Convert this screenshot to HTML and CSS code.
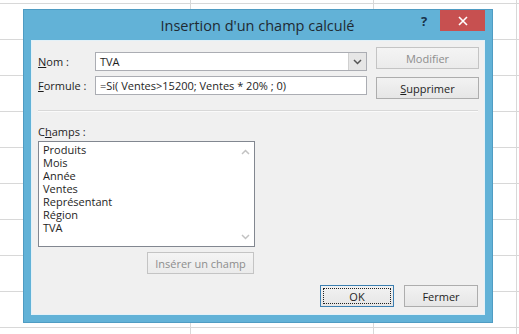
FILE: index.html
```html
<!DOCTYPE html>
<html lang="fr">
<head>
<meta charset="utf-8">
<title>Insertion d'un champ calculé</title>
<link rel="stylesheet" href="styles.css">
</head>
<body>
<div class="dialog">
  <div class="titlebar">
    <div class="title">Insertion d'un champ calculé</div>
    <div class="help">?</div>
    <div class="close">
      <svg width="10" height="10" viewBox="0 0 10 10"><path d="M1 1 L9 9 M9 1 L1 9" stroke="#fff" stroke-width="1.6" fill="none"/></svg>
    </div>
  </div>
  <div class="content">
    <div class="top">
      <div class="fields">
        <div class="row">
          <label class="lbl"><u>N</u>om :</label>
          <div class="combo">
            <span class="val">TVA</span>
            <span class="drop">
              <svg width="9" height="6" viewBox="0 0 9 6"><path d="M1 1 L4.5 4.5 L8 1" stroke="#555" stroke-width="1.5" fill="none"/></svg>
            </span>
          </div>
        </div>
        <div class="row">
          <label class="lbl"><u>F</u>ormule :</label>
          <div class="input"><span class="val">=Si( Ventes&gt;15200; Ventes * 20% ; 0)</span></div>
        </div>
      </div>
      <div class="side">
        <div class="btn disabled">Modifier</div>
        <div class="btn"><u>S</u>upprimer</div>
      </div>
    </div>
    <div class="sep"></div>
    <div class="champs-lbl">C<u>h</u>amps :</div>
    <div class="list">
      <ul class="items">
        <li>Produits</li>
        <li>Mois</li>
        <li>Année</li>
        <li>Ventes</li>
        <li>Représentant</li>
        <li>Région</li>
        <li>TVA</li>
      </ul>
      <div class="scroll">
        <svg width="9" height="6" viewBox="0 0 9 6"><path d="M1 5 L4.5 1.5 L8 5" stroke="#c2c2c2" stroke-width="1.5" fill="none"/></svg>
        <svg width="9" height="6" viewBox="0 0 9 6"><path d="M1 1 L4.5 4.5 L8 1" stroke="#c2c2c2" stroke-width="1.5" fill="none"/></svg>
      </div>
    </div>
    <div class="insert-row">
      <div class="btn disabled insert">Insérer un champ</div>
    </div>
    <div class="footer">
      <div class="btn ok"><span class="focus">OK</span></div>
      <div class="btn fermer">Fermer</div>
    </div>
  </div>
</div>
</body>
</html>
```

FILE: styles.css
```css
* { box-sizing: border-box; }
html, body { margin: 0; padding: 0; }
body {
  width: 519px;
  height: 334px;
  overflow: hidden;
  font-family: "Open Sans", "Noto Sans", sans-serif;
  font-size: 11px;
  color: #1e1e1e;
  background-color: #fff;
  background-image:
    linear-gradient(to right, transparent 190px, #d8d8d8 190px, #d8d8d8 191px, transparent 191px, transparent 373px, #d8d8d8 373px, #d8d8d8 374px, transparent 374px, transparent 516px, #d8d8d8 516px, #d8d8d8 517px, transparent 517px),
    repeating-linear-gradient(to bottom, transparent 0, transparent 3px, #d8d8d8 3px, #d8d8d8 4px, transparent 4px, transparent 36px);
  padding-top: 9px;
  padding-left: 23px;
}
.dialog {
  width: 470px;
  height: 314px;
  background: #62b2d7;
  border: 1px solid #4f9cc3;
  padding: 0 7px 7px 7px;
  display: flex;
  flex-direction: column;
}
.titlebar {
  height: 30px;
  display: flex;
  align-items: flex-start;
}
.title {
  flex: 1;
  text-align: center;
  font-size: 14.5px;
  line-height: 31px;
  color: #1f2a33;
  padding-left: 70px;
}
.help {
  width: 20px;
  font-weight: bold;
  font-size: 13px;
  color: #18334a;
  line-height: 22px;
  text-align: center;
  margin-right: 6px;
}
.close {
  width: 45px;
  height: 21px;
  background: #c75050;
  display: flex;
  align-items: center;
  justify-content: center;
}
.content {
  flex: 1;
  background: #f0f0f0;
  border: 1px solid #e3f1f8;
  padding: 6px 6px 0 6px;
  display: flex;
  flex-direction: column;
}
.top {
  display: flex;
  gap: 9px;
}
.fields {
  padding-top: 5px;
  display: flex;
  flex-direction: column;
  gap: 5px;
}
.row {
  display: flex;
  align-items: center;
  height: 19px;
}
.lbl {
  width: 57px;
  flex: none;
}
.combo, .input {
  width: 272px;
  height: 19px;
  background: #fff;
  border: 1px solid #abadb3;
  display: flex;
  align-items: center;
}
.val {
  flex: 1;
  padding-left: 4px;
  white-space: nowrap;
}
.drop {
  width: 18px;
  height: 17px;
  background: #e6e6e6;
  border-left: 1px solid #d0d0d0;
  display: flex;
  align-items: center;
  justify-content: center;
}
.side {
  display: flex;
  flex-direction: column;
  gap: 8px;
}
.btn {
  width: 103px;
  height: 22px;
  border: 1px solid #adadad;
  background: linear-gradient(#f2f2f2, #e6e6e6);
  display: flex;
  align-items: center;
  justify-content: center;
  color: #1e1e1e;
}
.btn.disabled {
  color: #8d8d8d;
  border-color: #c4c4c4;
  background: linear-gradient(#f4f4f4, #ebebeb);
}
.sep {
  height: 2px;
  border-top: 1px solid #d8d8d8;
  border-bottom: 1px solid #fafafa;
  margin: 11px 0 0 0;
}
.champs-lbl {
  margin-top: 12px;
  height: 16px;
  line-height: 16px;
}
.list {
  margin-top: 1px;
  width: 217px;
  height: 106px;
  background: #fff;
  border: 1px solid #828790;
  display: flex;
}
.items {
  list-style: none;
  margin: 0;
  padding: 1px 0 0 4px;
  flex: 1;
}
.items li {
  height: 13px;
  line-height: 13px;
}
.scroll {
  width: 17px;
  display: flex;
  flex-direction: column;
  justify-content: space-between;
  align-items: center;
  padding: 7px 0 6px 0;
}
.insert-row {
  width: 217px;
  display: flex;
  justify-content: flex-end;
  margin-top: 5px;
}
.btn.insert {
  width: 107px;
  height: 22px;
  margin-right: 1px;
}
.footer {
  display: flex;
  justify-content: flex-end;
  gap: 10px;
  margin-top: 11px;
}
.btn.ok, .btn.fermer {
  width: 74px;
}
.btn.ok {
  border-color: #3c7fb1;
  padding: 2px;
}
.focus {
  flex: 1;
  align-self: stretch;
  border: 1px dotted #222;
  display: flex;
  align-items: center;
  justify-content: center;
}
u { text-decoration: underline; text-underline-offset: 1px; }
```
